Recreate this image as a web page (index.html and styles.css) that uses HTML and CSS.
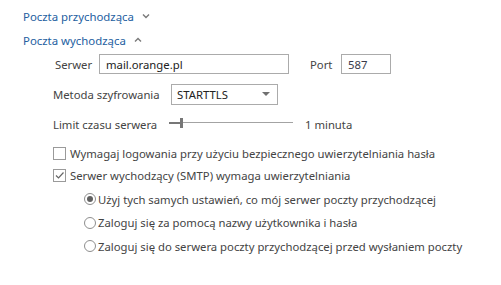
FILE: index.html
```html
<!DOCTYPE html>
<html lang="pl">
<head>
    <meta charset="UTF-8">
    <title>Ustawienia poczty</title>
    <link rel="stylesheet" href="styles.css">
</head>
<body>
    <div class="panel">
        <div class="section-title">
            Poczta przychodząca
            <svg class="chevron" width="8" height="6" viewBox="0 0 8 6"><path d="M1 1.5 L4 4.5 L7 1.5" fill="none" stroke="#7a7a7a" stroke-width="1.4"/></svg>
        </div>
        <div class="section-title">
            Poczta wychodząca
            <svg class="chevron" width="8" height="6" viewBox="0 0 8 6"><path d="M1 4.5 L4 1.5 L7 4.5" fill="none" stroke="#7a7a7a" stroke-width="1.4"/></svg>
        </div>

        <div class="form">
            <div class="row row-server">
                <label class="label-server" for="server">Serwer</label>
                <input type="text" id="server" class="text-input server-input" value="mail.orange.pl">
                <label class="label-port" for="port">Port</label>
                <input type="text" id="port" class="text-input port-input" value="587">
            </div>

            <div class="row row-method">
                <label class="label-method">Metoda szyfrowania</label>
                <div class="select-box">
                    <span>STARTTLS</span>
                    <svg width="8" height="5" viewBox="0 0 8 5"><path d="M0 0 H8 L4 4 Z" fill="#707070"/></svg>
                </div>
            </div>

            <div class="row row-timeout">
                <span class="label-timeout">Limit czasu serwera</span>
                <div class="slider">
                    <div class="slider-fill"></div>
                    <div class="slider-thumb"></div>
                    <div class="slider-rest"></div>
                </div>
                <span class="timeout-value">1 minuta</span>
            </div>

            <div class="checks">
                <div class="check-row">
                    <span class="checkbox"></span>
                    Wymagaj logowania przy użyciu bezpiecznego uwierzytelniania hasła
                </div>
                <div class="check-row">
                    <span class="checkbox">
                        <svg width="11" height="11" viewBox="0 0 11 11"><path d="M2 5.5 L4.5 8 L9.5 2.5" fill="none" stroke="#666" stroke-width="1.2"/></svg>
                    </span>
                    Serwer wychodzący (SMTP) wymaga uwierzytelniania
                </div>
            </div>

            <div class="radio-group">
                <div class="radio-row">
                    <span class="radio checked"></span>
                    Użyj tych samych ustawień, co mój serwer poczty przychodzącej
                </div>
                <div class="radio-row">
                    <span class="radio"></span>
                    Zaloguj się za pomocą nazwy użytkownika i hasła
                </div>
                <div class="radio-row">
                    <span class="radio"></span>
                    Zaloguj się do serwera poczty przychodzącej przed wysłaniem poczty
                </div>
            </div>
        </div>
    </div>
</body>
</html>
```

FILE: styles.css
```css
body {
    margin: 0;
    background-color: #ffffff;
    font-family: "Noto Sans", "Open Sans", sans-serif;
    font-size: 11.3px;
    color: #444444;
}
.panel {
    padding: 4px 0 0 23px;
}
.section-title {
    height: 24px;
    font-size: 11.4px;
    color: #24609f;
    display: flex;
    align-items: center;
}
.chevron {
    margin-left: 8px;
}
.form {
    padding-left: 30px;
    padding-top: 2px;
}
.row {
    display: flex;
    align-items: center;
}
.row-server {
    height: 20px;
}
.label-server {
    width: 44px;
    padding-left: 2px;
}
.text-input {
    box-sizing: border-box;
    height: 20px;
    border: 1px solid #ababab;
    font-family: "Noto Sans", "Open Sans", sans-serif;
    font-size: 11.3px;
    color: #222222;
    padding: 0 6px;
    outline: none;
}
.server-input {
    width: 190px;
}
.label-port {
    margin-left: 21px;
    width: 31px;
}
.port-input {
    width: 50px;
    color: #3a3a4a;
}
.row-method {
    height: 21px;
    margin-top: 10px;
}
.label-method {
    width: 118px;
}
.select-box {
    box-sizing: border-box;
    width: 107px;
    height: 21px;
    border: 1px solid #ababab;
    display: flex;
    align-items: center;
    justify-content: space-between;
    padding: 0 7px 0 5px;
    color: #222222;
}
.row-timeout {
    height: 20px;
    margin-top: 9px;
}
.label-timeout {
    width: 116px;
}
.slider {
    width: 124px;
    height: 10px;
    display: flex;
    align-items: center;
    margin-top: -3px;
}
.slider-fill {
    width: 11px;
    height: 2px;
    background-color: #777777;
}
.slider-thumb {
    width: 3px;
    height: 10px;
    background-color: #777777;
}
.slider-rest {
    flex: 1;
    height: 1px;
    background-color: #a3a3a3;
}
.timeout-value {
    margin-left: 12px;
}
.checks {
    margin-top: 8px;
}
.check-row {
    display: flex;
    align-items: center;
    height: 22px;
}
.checkbox {
    box-sizing: border-box;
    width: 13px;
    height: 13px;
    border: 1px solid #9a9a9a;
    margin-right: 4px;
    display: flex;
    align-items: center;
    justify-content: center;
}
.radio-group {
    padding-left: 31px;
    margin-top: 1.5px;
}
.radio-row {
    display: flex;
    align-items: center;
    height: 23.5px;
}
.radio {
    box-sizing: border-box;
    width: 12px;
    height: 12px;
    border: 1px solid #8e8e8e;
    border-radius: 50%;
    margin-right: 2px;
    position: relative;
}
.radio.checked::after {
    content: "";
    position: absolute;
    left: 2px;
    top: 2px;
    width: 6px;
    height: 6px;
    border-radius: 50%;
    background-color: #606060;
}
```
